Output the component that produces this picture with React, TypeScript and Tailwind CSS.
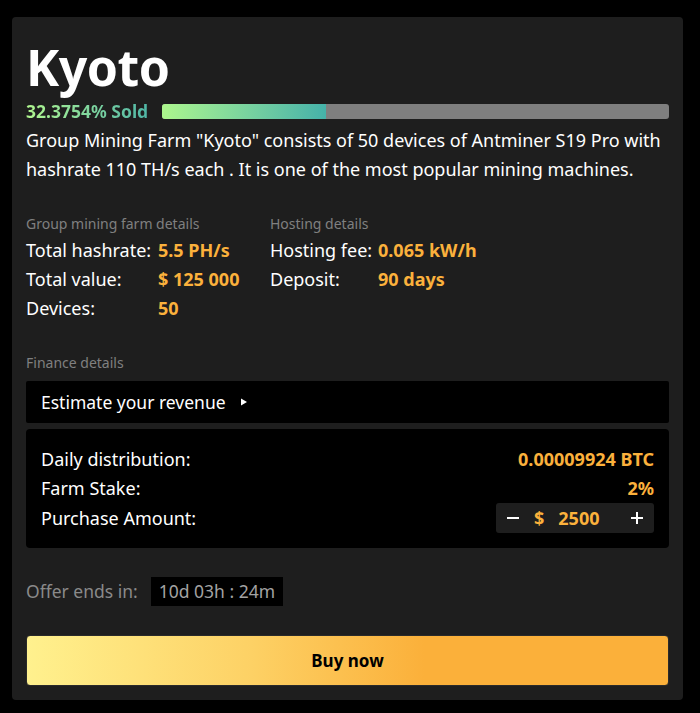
import { useState } from "react";

const farm = [
  { label: "Total hashrate:", value: "5.5 PH/s" },
  { label: "Total value:", value: "$ 125 000" },
  { label: "Devices:", value: "50" },
];

const hosting = [
  { label: "Hosting fee:", value: "0.065 kW/h" },
  { label: "Deposit:", value: "90 days" },
];

const sold = 32.3754;

export default function App() {
  const [amount, setAmount] = useState(2500);

  return (
    <div
      className="min-h-[713px] bg-black pt-[17px] pl-[12px] pr-[17px] pb-[14px] text-white"
      style={{ fontFamily: '"Noto Sans", "DejaVu Sans", sans-serif' }}
    >
      <div className="rounded-[4px] bg-[#1e1e1e] px-[14px] pt-[22px] pb-[14px]">
        {/* Header */}
        <h1 className="text-[50px] font-bold leading-[56px] tracking-[-0.5px]">Kyoto</h1>

        <div className="mt-[6px] flex items-center gap-[14px]">
          <span className="bg-gradient-to-r from-[#b0f78e] to-[#4fb6a6] bg-clip-text text-[17.5px] font-bold leading-[20px] text-transparent">
            {sold}% Sold
          </span>
          <div className="h-[15px] flex-1 overflow-hidden rounded-[3px] bg-[#7f7f7f]">
            <div
              className="h-full bg-gradient-to-r from-[#acf68c] to-[#45b2a9]"
              style={{ width: `${sold}%` }}
            />
          </div>
        </div>

        <p className="mt-[5px] text-[18px] leading-[29px]">
          Group Mining Farm "Kyoto" consists of 50 devices of Antminer S19 Pro with hashrate 110 TH/s each . It
          is one of the most popular mining machines.
        </p>

        {/* Details */}
        <div className="mt-[30px] flex gap-[20px]">
          <div className="w-[224px]">
            <div className="mb-[2px] text-[14px] leading-[20px] text-[#808080]">Group mining farm details</div>
            {farm.map((row) => (
              <div key={row.label} className="flex text-[18px] leading-[29px]">
                <span className="w-[132px]">{row.label}</span>
                <span className="font-bold text-[#fbb13c]">{row.value}</span>
              </div>
            ))}
          </div>
          <div>
            <div className="mb-[2px] text-[14px] leading-[20px] text-[#808080]">Hosting details</div>
            {hosting.map((row) => (
              <div key={row.label} className="flex text-[18px] leading-[29px]">
                <span className="w-[108px]">{row.label}</span>
                <span className="font-bold text-[#fbb13c]">{row.value}</span>
              </div>
            ))}
          </div>
        </div>

        {/* Finance */}
        <div className="mt-[30px] text-[14px] leading-[20px] text-[#808080]">Finance details</div>
        <button className="mt-[8px] flex h-[42px] w-full items-center gap-[14px] rounded-[2px] bg-black px-[15px] text-[17.5px]">
          Estimate your revenue
          <svg width="8" height="8" viewBox="0 0 8 8" className="fill-white">
            <path d="M1 0.5 L7 4 L1 7.5 Z" />
          </svg>
        </button>

        <div className="mt-[6px] rounded-[4px] bg-black px-[15px] pt-[16px] pb-[15px] text-[18px] leading-[29px]">
          <div className="flex justify-between">
            <span>Daily distribution:</span>
            <span className="font-bold text-[#fbb13c]">0.00009924 BTC</span>
          </div>
          <div className="flex justify-between">
            <span>Farm Stake:</span>
            <span className="font-bold text-[#fbb13c]">2%</span>
          </div>
          <div className="flex items-center justify-between">
            <span>Purchase Amount:</span>
            <div className="flex h-[30px] w-[158px] items-center rounded-[3px] bg-[#1e1e1e] px-[10px]">
              <button
                className="flex w-[14px] items-center justify-center"
                onClick={() => setAmount((a) => Math.max(0, a - 100))}
              >
                <svg width="12" height="12" viewBox="0 0 12 12">
                  <path d="M0 6 H12" stroke="white" strokeWidth="2" />
                </svg>
              </button>
              <span className="ml-[14px] font-bold text-[#fbb13c]">$</span>
              <span className="ml-[14px] w-[60px] font-bold text-[#fbb13c]">{amount}</span>
              <button
                className="ml-auto flex w-[14px] items-center justify-center"
                onClick={() => setAmount((a) => a + 100)}
              >
                <svg width="12" height="12" viewBox="0 0 12 12">
                  <path d="M0 6 H12 M6 0 V12" stroke="white" strokeWidth="2" />
                </svg>
              </button>
            </div>
          </div>
        </div>

        {/* Timer */}
        <div className="mt-[29px] flex items-center gap-[13px]">
          <span className="text-[17.5px] text-[#8a8a8a]">Offer ends in:</span>
          <span className="bg-black px-[8px] text-[17.5px] leading-[29px] text-[#a3a3a3]">10d 03h : 24m</span>
        </div>

        <button className="mt-[29px] h-[51px] w-full rounded-[4px] border border-[#2a2a2a] bg-[linear-gradient(90deg,#fff18e_0%,#fdd165_35%,#fbb03a_62%,#fbb03a_100%)] text-[17px] font-bold text-black">
          Buy now
        </button>
      </div>
    </div>
  );
}
